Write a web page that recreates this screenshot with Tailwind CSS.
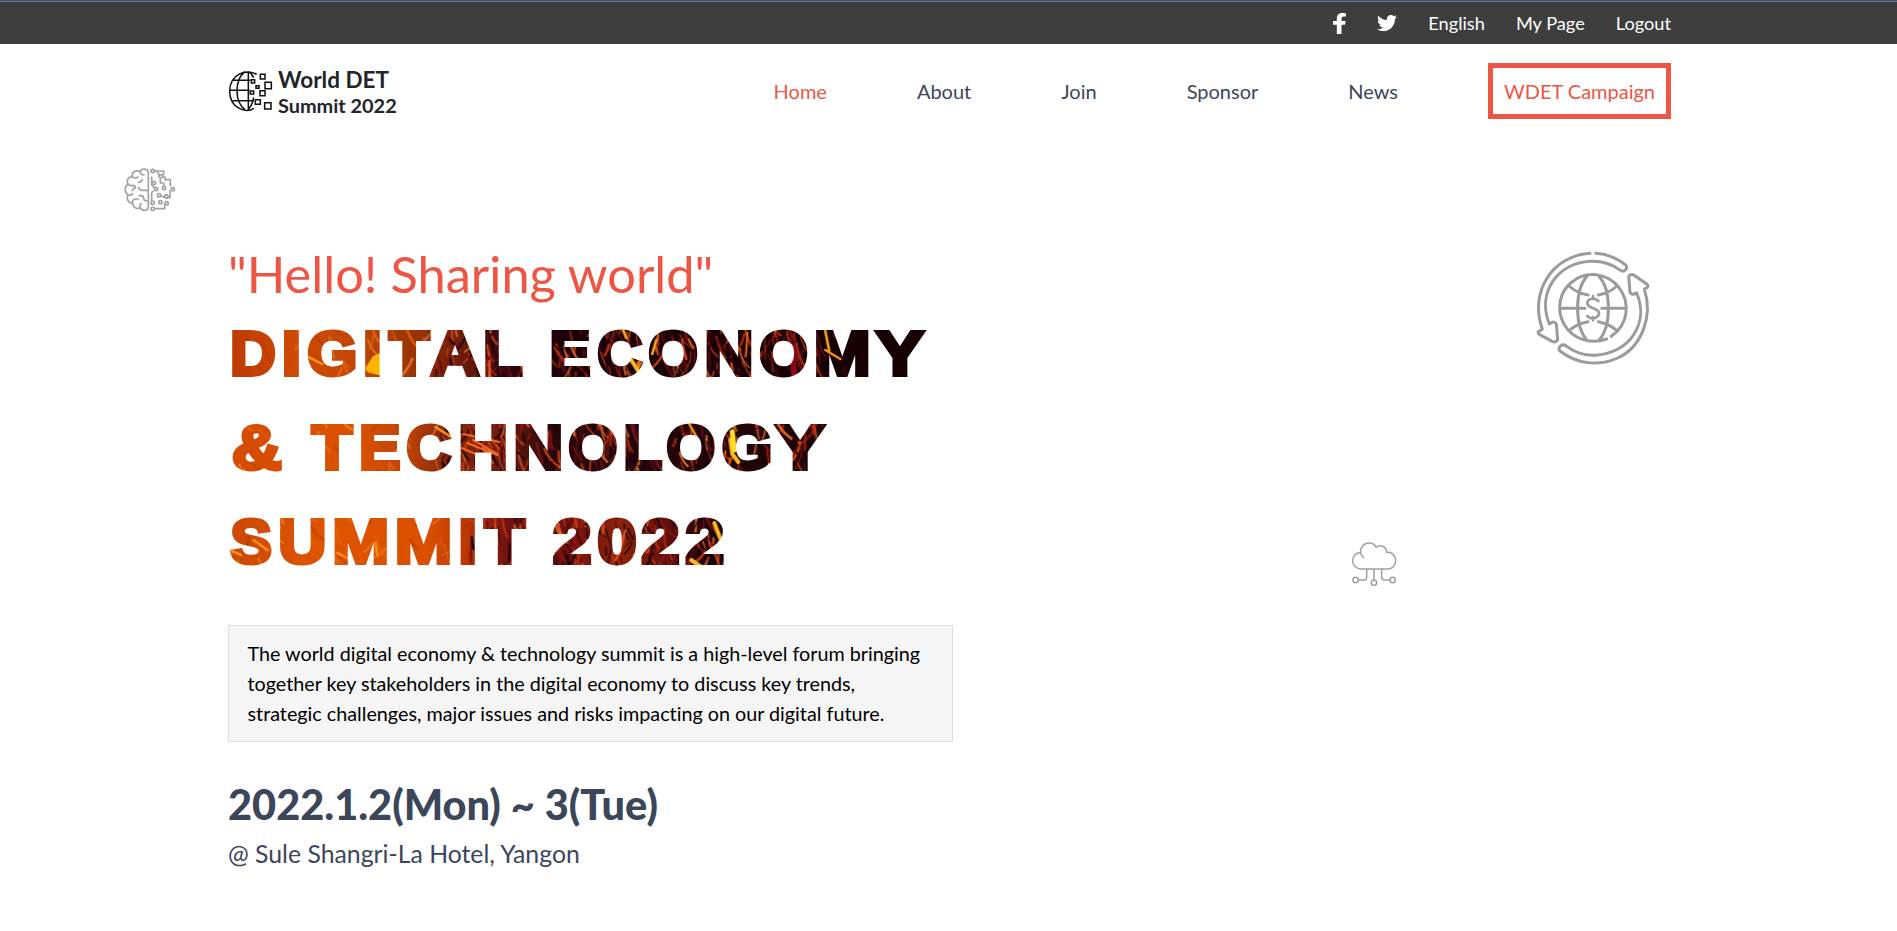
<!DOCTYPE html>
<html lang="en">
<head>
<meta charset="utf-8">
<title>World DET Summit 2022</title>
<script src="https://cdn.jsdelivr.net/npm/@tailwindcss/browser@4"></script>
</head>
<body class="relative h-[931px] overflow-hidden bg-white font-['Lato',sans-serif] text-[#3c465a] [font-variant-ligatures:none]">
<div class="h-11 border-t border-[#43526f] bg-[#3e3e3e]">
  <div class="h-full border-t border-[#64748b]">
    <div class="ml-[228px] flex h-full w-[1443px] items-center justify-end gap-[31px] text-[18.2px] leading-[22px] text-white">
      <svg class="h-[21px] w-[13px]" viewBox="22 0 279 512" preserveAspectRatio="none" fill="currentColor"><path d="M279.14 288l14.22-92.66h-88.91v-60.13c0-25.35 12.42-50.06 52.24-50.06h40.42V6.26S260.43 0 225.36 0c-73.22 0-121.08 44.38-121.08 124.72v70.62H22.89V288h81.39v224h100.17V288z"/></svg>
      <svg class="h-5 w-5" viewBox="0 0 512 512" fill="currentColor"><path d="M459.37 151.716c.325 4.548.325 9.097.325 13.645 0 138.72-105.583 298.558-298.558 298.558-59.452 0-114.68-17.219-161.137-47.106 8.447.974 16.568 1.299 25.34 1.299 49.055 0 94.213-16.568 130.274-44.832-46.132-.975-84.792-31.188-98.112-72.772 6.498.974 12.995 1.624 19.818 1.624 9.421 0 18.843-1.3 27.614-3.573-48.081-9.747-84.143-51.98-84.143-102.985v-1.299c13.969 7.797 30.214 12.67 47.431 13.319-28.264-18.843-46.781-51.005-46.781-87.391 0-19.492 5.197-37.36 14.294-52.954 51.655 63.675 129.3 105.258 216.365 109.807-1.624-7.797-2.599-15.918-2.599-24.04 0-57.828 46.782-104.934 104.934-104.934 30.213 0 57.502 12.67 76.67 33.137 23.715-4.548 46.456-13.32 66.599-25.34-7.798 24.366-24.366 44.833-46.132 57.827 21.117-2.273 41.584-8.122 60.426-16.243-14.292 20.791-32.161 39.308-52.628 54.253z"/></svg>
      <a>English</a><a>My Page</a><a>Logout</a>
    </div>
  </div>
</div>

<header class="ml-[228px] flex h-[94px] w-[1443px] items-center justify-between">
  <a class="-ml-2 flex items-start self-start pt-[18px] text-[#212529]">
    <svg class="h-14 w-[50px] shrink-0 overflow-visible" viewBox="0 0 150 168" fill="none" stroke="#111" stroke-width="4">
      <path stroke-width="4.6" d="M110 37C77 20 30 36 29 87c0 53 49 67 73 52M85 29v114M75 29C43 54 43 118 75 143M85 29c9 4 12 9 16 18M101 106c-2 14-7 26-16 36M39 55h52M29 85h60M38 116h64"/>
      <path d="M121 37h14v14h-14zM94 53h10v10H94zM135 61h19v19h-19zM108 71h9v8h-9zM91 87h10v9H91zM120 86h15v15h-15zM106 113h15v14h-15zM134 122h19v19h-19z" stroke-width="4.6"/>
    </svg>
    <span class="ml-2 mt-[5px] flex flex-col whitespace-nowrap font-bold"><span class="text-[22.5px] leading-[26px]">World DET</span><span class="text-[19.9px] leading-6">Summit 2022</span></span>
  </a>
  <nav class="flex items-center gap-[90px] text-[20px] leading-6">
    <a class="text-[#ed5545]">Home</a><a>About</a><a>Join</a><a>Sponsor</a><a>News</a>
    <a class="flex h-14 w-[183px] items-center justify-center border-5 border-[#ed5545] text-[#ed5545]">WDET Campaign</a>
  </nav>
</header>

<main class="ml-[228px] w-[1443px] pt-[106px]">
  <h2 class="h-[60px] text-[50.6px] leading-[60px] text-[#ed5545]">"Hello! Sharing world"</h2>
  <svg id="title" class="-ml-px block h-[282px] w-[740px]" viewBox="227.7 304 740 282" font-family="'Liberation Sans',Arial,sans-serif" font-weight="700" font-size="62.5" stroke-width="4" stroke-miterlimit="3">
    <defs>
      <linearGradient id="g1" gradientUnits="userSpaceOnUse" x1="230" x2="930" y1="0" y2="0"><stop offset="0" stop-color="#bd3a04"/><stop offset=".1" stop-color="#d04a02"/><stop offset=".18" stop-color="#c24707"/><stop offset=".27" stop-color="#963204"/><stop offset=".35" stop-color="#5f160b"/><stop offset=".4" stop-color="#2c0310"/><stop offset=".5" stop-color="#1b0207"/><stop offset="1" stop-color="#160003"/></linearGradient>
      <linearGradient id="g2" gradientUnits="userSpaceOnUse" x1="230" x2="930" y1="0" y2="0"><stop offset="0" stop-color="#d44b02"/><stop offset=".18" stop-color="#dc5200"/><stop offset=".25" stop-color="#c34505"/><stop offset=".31" stop-color="#86290c"/><stop offset=".39" stop-color="#6e1a0d"/><stop offset=".46" stop-color="#2a070c"/><stop offset="1" stop-color="#170104"/></linearGradient>
      <linearGradient id="g3" gradientUnits="userSpaceOnUse" x1="230" x2="930" y1="0" y2="0"><stop offset="0" stop-color="#cc4904"/><stop offset=".13" stop-color="#df5400"/><stop offset=".28" stop-color="#db5000"/><stop offset=".34" stop-color="#b93605"/><stop offset=".4" stop-color="#6c1012"/><stop offset=".49" stop-color="#700f0e"/><stop offset=".56" stop-color="#8c240a"/><stop offset=".63" stop-color="#5e0e0c"/><stop offset=".69" stop-color="#1c0308"/><stop offset="1" stop-color="#160003"/></linearGradient>
      <pattern id="fire" patternUnits="userSpaceOnUse" x="227" y="303" width="740" height="282" viewBox="227 303 740 282">
        <rect x="227" y="303" width="740" height="100" fill="url(#g1)"/>
        <rect x="227" y="400" width="740" height="100" fill="url(#g2)"/>
        <rect x="227" y="494" width="740" height="100" fill="url(#g3)"/>
        <g id="sparks" fill="none" stroke-linecap="round"></g>
        <g fill="none" stroke-linecap="round">
          <path d="M366 368l8-12 9-4v24l-15-4z" fill="#ffb404"/>
          <path d="M307 356l16 8" stroke="#f59a1c" stroke-width="2.5"/>
          <path d="M630 357l9 14M731 440l2 14 6 8M715 523l7 18M692 560l14 10" stroke="#ffb81c" stroke-width="4"/>
          <path d="M826 331l4 20M657 340l-4 14M624 330l3 8" stroke="#f8b020" stroke-width="2.5"/>
          <path d="M733 432l2 18" stroke="#ffe02c" stroke-width="5"/>
          <path d="M826 350l15 9M770 464l-3 14M376 543l2 12M338 553l16 8M232 551l10 4M254 540l14 10M436 427l16 10M690 424l8 14" stroke="#f8901a" stroke-width="2.5"/>
          <path d="M793 346l2 30" stroke="#a80618" stroke-width="6" opacity=".8"/>
          <path d="M468 443l30 12M464 434l36 8M462 448l22 9M474 440l24 14" stroke="#f4661a" stroke-width="2.2"/>
        </g>
      </pattern>
    </defs>
    <text y="375" fill="url(#fire)" stroke="url(#fire)" data-ink="232.7-276.5 284.3-300 308-356.5 365.5-380.8 387.5-432 430-481 485.5-523 _ 552-591.5 598-644 649-699 707-752 760-809 816.5-870 875.5-926">DIGITAL ECONOMY</text>
    <text y="469" fill="url(#fire)" stroke="url(#fire)" data-ink="232.5-283.5 _ 310.3-355 361.5-401.5 407-453 461-506.5 516-561.6 569-618.5 626-664 667-716.5 722.5-771.5 775.5-826.5">&amp; TECHNOLOGY</text>
    <text y="563" fill="url(#fire)" stroke="url(#fire)" data-ink="230-273 280-326 335-388.5 397.5-451.5 461-476 483-527.5 _ 553.5-593 598-637 642-681 686-725.5">SUMMIT 2022</text>
  </svg>
  <p class="mt-[39px] h-[117px] w-[725px] whitespace-nowrap border border-[#e4dbdd] bg-[#f5f5f5] px-[18.5px] pt-[12.5px] text-[19.75px] leading-[30px] text-black">The world digital economy &amp; technology summit is a high-level forum bringing<br>together key stakeholders in the digital economy to discuss key trends,<br>strategic challenges, major issues and risks impacting on our digital future.</p>
  <h3 class="mt-[37px] text-[41.5px] font-black leading-[50px]">2022.1.2(Mon) ~ 3(Tue)</h3>
  <p class="mt-[10px] text-[24.8px] leading-[30px]">@ Sule Shangri-La Hotel, Yangon</p>
</main>

<svg class="absolute left-[110px] top-[155px] h-[70px] w-20" viewBox="0 0 240 210" fill="none" stroke="#a2a2a2" stroke-width="5" stroke-linecap="round" stroke-linejoin="round">
  <path d="M115 54C115 40 94 38 90 50C75 43 65 53 67 64C52 66 49 79 54 87C43 95 43 112 54 119C48 132 55 145 68 145C70 160 83 163 91 158C96 170 115 168 115 155ZM90 50C91 57 96 60 102 60M67 64C69 71 80 70 84 66M86 82q9-1 10-8M54 87q3 7 13 4q8 0 10 8M67 107q3-9 10-8M86 97q2 10 13 9l15 0M54 119q9 4 14-3M68 145q-2-12 9-13h8M91 158q-5-8 3-12M88 122q12-2 13 8q1 9 13 8"/>
  <path d="M125 66v24l8 8M125 137v-25l4-3M133 48h28v12M152 64l-10-12M157 66h8v8h16v18M161 94V84h-10v-10M152 122l14 6h14v-20M134 161h30v-12"/>
  <g fill="#fff"><circle cx="128" cy="48" r="5"/><circle cx="152" cy="64" r="5"/><circle cx="132" cy="84" r="5"/><circle cx="138" cy="102" r="5"/><circle cx="162" cy="99" r="5"/><circle cx="188" cy="103" r="5"/><circle cx="147" cy="121" r="5"/><circle cx="169" cy="124" r="5"/><circle cx="128" cy="143" r="5"/><circle cx="151" cy="142" r="5"/><circle cx="170" cy="145" r="5"/><circle cx="128" cy="161" r="5"/></g>
</svg>

<svg class="absolute left-[1520px] top-[235px] h-[140px] w-[150px]" viewBox="0 0 450 420" fill="none" stroke="#9b9b9b" stroke-width="9" stroke-linecap="round" stroke-linejoin="round">
  <path d="M210 55C95 62 27 174 67 282L55 290Q53 295 58 298L98 320Q108 323 113 314L109 267Q104 259 96 262L88 267C50 172 112 84 212 79Q262 77 301 106C314 114 325 98 317 90Q276 58 228 55"/>
  <path d="M373 162L381 158Q386 153 381 148L340 119Q330 117 326 125L330 172Q334 180 342 177L350 174C390 268 324 356 226 361Q177 363 137 332C123 324 111 341 120 348C170 387 235 395 293 369C364 337 400 245 373 162Z"/>
  <path d="M260 312C210 330 158 311 133 269C108 224 117 171 156 141C200 105 260 115 295 155C333 204 325 268 274 304M202 122C163 165 163 274 202 317M236 122C275 165 275 274 236 317M119 220H195M245 220H319M151 156Q170 173 204 180M287 156Q268 173 235 180M151 284Q170 267 204 260M287 284Q268 267 235 260"/>
  <path d="M235 198Q218 183 204 197Q196 211 218 219Q245 228 234 243Q218 259 202 243M219 183v9M219 247v9" stroke-width="8"/>
</svg>

<svg class="absolute left-[1335px] top-[530px] h-[70px] w-20" viewBox="0 0 240 210" fill="none" stroke="#a0a0a0" stroke-width="4.5" stroke-linecap="round" stroke-linejoin="round">
  <path d="M86 83C76 77 75 60 79 54C91 32 117 36 123 52C137 42 154 50 155 67C172 65 182 78 182 92C182 107 171 117 158 117H79C64 117 53 106 53 92C53 78 64 67 77 68M95 118v24q0 8-8 8H71M117 118v32M140 118v24q0 8 8 8h16"/>
  <circle cx="62" cy="150" r="8"/><circle cx="117" cy="158" r="8"/><circle cx="173" cy="150" r="8"/>
</svg>

<script>
const NS = 'http://www.w3.org/2000/svg';
// Fit every title glyph to its horizontal ink range
const ctx = document.createElement('canvas').getContext('2d');
ctx.font = "700 625px 'Liberation Sans'";
document.querySelectorAll('#title text').forEach(t => {
  const ranges = t.dataset.ink.split(' ');
  const chars = [...t.textContent];
  t.textContent = '';
  chars.forEach((ch, i) => {
    const s = document.createElementNS(NS, 'tspan');
    s.textContent = ch;
    if (ranges[i] !== '_') {
      const [a, b] = ranges[i].split('-').map(Number);
      const m = ctx.measureText(ch);
      const l = -m.actualBoundingBoxLeft / 10, r = m.actualBoundingBoxRight / 10;
      const k = (b - a) / (r - l + 4);
      s.setAttribute('x', a - (l - 2) * k);
      s.setAttribute('textLength', m.width / 10 * k);
      s.setAttribute('lengthAdjust', 'spacingAndGlyphs');
    }
    t.appendChild(s);
  });
});
// Fine sparks, denser and brighter over the dark side
let seed = 17;
const rnd = () => (seed = (seed * 16807) % 2147483647) / 2147483647;
const g = document.getElementById('sparks');
for (let i = 0; i < 2600; i++) {
  const x = 230 + rnd() * 620, y = 320 + rnd() * 255;
  const row = y < 390 ? 0 : y < 485 ? 1 : 2;
  const dark = x > [430, 440, 470][row];
  if (!dark && rnd() < .75) continue;
  if (x > 845 && row === 0) continue;
  const len = 6 + rnd() * 20, ang = (dark ? .85 : .6) + rnd() * .8;
  const flip = rnd() < .25 ? -1 : 1;
  const p = document.createElementNS(NS, 'path');
  const dx = Math.cos(ang) * len * flip, dy = Math.sin(ang) * len;
  p.setAttribute('d', `M${x} ${y}q${dx * .3} ${dy * .6} ${dx} ${dy}`);
  const c = dark ? ['#c8320c', '#e8501a', '#8e1210', '#6b0a16', '#f0702a', '#b82810', '#150208', '#200008', '#1a0206', '#12000a'] : ['#f07818', '#b83c06', '#e86410', '#a83404', '#f0883a'];
  p.setAttribute('stroke', c[Math.floor(rnd() * c.length)]);
  p.setAttribute('stroke-width', .8 + rnd() * 1.9);
  p.setAttribute('opacity', (dark ? .5 : .35) + rnd() * .45);
  g.appendChild(p);
}
</script>
</body>
</html>
